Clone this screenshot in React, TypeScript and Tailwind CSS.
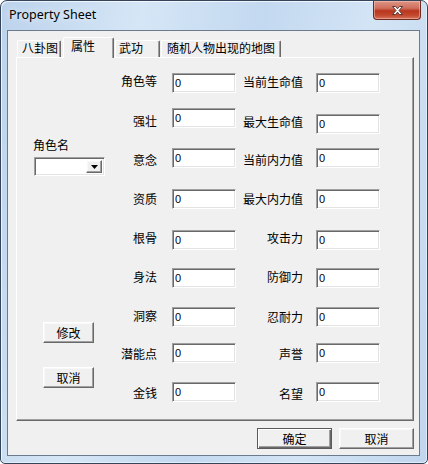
import {FC} from "react";

const cjk = "font-['Noto_Sans_CJK_SC','Noto_Sans_CJK_JP',sans-serif]";
const raised = "border border-t-white border-l-white border-r-[#696969] border-b-[#696969] shadow-[inset_-1px_-1px_0_#a0a0a0,inset_1px_1px_0_#f8f8f8]";
const sunken = "border border-t-[#a0a0a0] border-l-[#a0a0a0] border-r-white border-b-white shadow-[inset_1px_1px_0_#696969,inset_-1px_-1px_0_#e3e3e3]";

// label columns: text + margin from the one above
const leftLabels = [
    ["角色等", "mt-[15px]"], ["强壮", "mt-[24px]"], ["意念", "mt-[23px]"],
    ["资质", "mt-[23px]"], ["根骨", "mt-[23px]"], ["身法", "mt-[23px]"],
    ["洞察", "mt-[23px]"], ["潜能点", "mt-[22px]"], ["金钱", "mt-[23px]"],
];
const leftInputs = ["mt-[15px]", "mt-[15px]", "mt-[20px]", "mt-[21px]", "mt-[21px]", "mt-[18px]", "mt-[19px]", "mt-[16px]", "mt-[19px]"];

const rightLabels = [
    ["当前生命值", "mt-[16px]"], ["最大生命值", "mt-[24px]"], ["当前内力值", "mt-[22px]"],
    ["最大内力值", "mt-[23px]"], ["攻击力", "mt-[23px]"], ["防御力", "mt-[23px]"],
    ["忍耐力", "mt-[24px]"], ["声誉", "mt-[21px]"], ["名望", "mt-[24px]"],
];
const rightInputs = ["mt-[15px]", "mt-[21px]", "mt-[14px]", "mt-[21px]", "mt-[21px]", "mt-[18px]", "mt-[19px]", "mt-[16px]", "mt-[19px]"];

const Field: FC<{className: string}> = ({className}) => (
    <input readOnly value="0"
           className={`h-[20px] w-[64px] bg-white px-[2px] text-[11px] text-black font-['Liberation_Sans',sans-serif] outline-none ${sunken} ${className}`}/>
);

const Btn: FC<{label: string, className: string}> = ({label, className}) => (
    <button className={`flex h-[21px] items-center justify-center bg-[#f0f0f0] text-[12px] leading-[14px] text-black ${cjk} ${className}`}>
        {label}
    </button>
);

const Tab: FC<{label: string, active?: boolean, className: string}> = ({label, active, className}) => (
    <div className={active
        ? `relative z-10 -mb-[1px] h-[21px] whitespace-nowrap rounded-t-[2px] border-l border-t border-r border-l-white border-t-white border-r-[#696969] bg-[#f0f0f0] shadow-[inset_-1px_0_0_#a0a0a0] text-[12px] leading-[14px] ${cjk} ${className}`
        : `h-[17px] whitespace-nowrap rounded-t-[2px] border-l border-t border-r border-l-white border-t-white border-r-[#696969] bg-[#f0f0f0] shadow-[inset_-1px_0_0_#a0a0a0] text-[12px] leading-[14px] ${cjk} ${className}`}>
        {label}
    </div>
);

const App: FC = () => {
    return (
        <div className="h-[464px] w-[428px] bg-white">
            <div className="flex h-[464px] w-[428px] flex-col rounded-t-[7px] rounded-b-[5px] border border-[#34445a] bg-[linear-gradient(100deg,#bcd3ec_0%,#d5e6f6_28%,#c3d9f0_52%,#d3e4f5_74%,#c0d6ee_100%)] shadow-[inset_1px_1px_0_rgba(255,255,255,0.7),inset_-1px_-1px_0_rgba(255,255,255,0.5)]">
                {/* title bar */}
                <div className="flex h-[29px] shrink-0 items-start">
                    <span className="ml-[8px] mt-[5px] text-[12.5px] leading-[17px] text-black font-['Noto_Sans',sans-serif] [text-shadow:0_0_6px_rgba(255,255,255,0.9)]">
                        Property Sheet
                    </span>
                    <div className="ml-auto mr-[6px] flex h-[19px] w-[48px] items-center justify-center rounded-b-[4px] border border-t-0 border-[#6e2b20] bg-[linear-gradient(180deg,#dc9686_0%,#cf6e5c_40%,#b8351d_55%,#c24a30_80%,#d8745a_100%)] shadow-[inset_0_0_0_1px_rgba(255,210,200,0.45)]">
                        <svg width="13" height="11" viewBox="0 0 13 11">
                            <path d="M1.5 1.5h3l2 2.3 2-2.3h3l-3.5 4 3.5 4h-3l-2-2.3-2 2.3h-3l3.5-4z"
                                  fill="#fff" stroke="#5a3a36" strokeWidth="1" strokeLinejoin="round"/>
                        </svg>
                    </div>
                </div>

                {/* client area */}
                <div className="mb-[7px] ml-[6px] mr-[7px] flex flex-1 flex-col border border-[#6b7a8c] bg-[#f0f0f0] pl-[8px] pt-[6px]">
                    <div className="flex h-[20px] items-end">
                        <Tab label="八卦图" className="ml-[1px] w-[44px] pl-[4px]"/>
                        <Tab label="属性" active className="ml-[2px] w-[51px] pl-[7px] pt-[1px]"/>
                        <Tab label="武功" className="ml-[1px] w-[45px] pl-[3px]"/>
                        <Tab label="随机人物出现的地图" className="ml-[1px] w-[120px] pl-[5px]"/>
                    </div>

                    <div className="flex h-[364px] w-[398px] border border-t-white border-l-white border-r-[#696969] border-b-[#696969] shadow-[inset_-1px_-1px_0_#a0a0a0]">
                        {/* left column */}
                        <div className="ml-[16px] flex w-[72px] flex-col">
                            <span className={`mt-[79px] h-[16px] text-[12px] leading-[16px] text-black ${cjk}`}>角色名</span>
                            <div className={`ml-[1px] mt-[4px] flex h-[19px] w-[71px] justify-end bg-white p-[2px] ${sunken}`}>
                                <div className={`flex h-full w-[16px] items-center justify-center bg-[#f0f0f0] ${raised}`}>
                                    <svg width="7" height="4" viewBox="0 0 7 4">
                                        <path d="M0 0h7L3.5 4z" fill="#000"/>
                                    </svg>
                                </div>
                            </div>
                            <Btn label="修改" className={`ml-[10px] mt-[146px] w-[51px] ${raised}`}/>
                            <Btn label="取消" className={`ml-[10px] mt-[24px] w-[51px] ${raised}`}/>
                        </div>

                        {/* first group */}
                        <div className="flex w-[52px] flex-col items-end">
                            {leftLabels.map(([t, m]) => (
                                <span key={t} className={`h-[16px] whitespace-nowrap text-[12px] leading-[16px] text-black ${cjk} ${m}`}>{t}</span>
                            ))}
                        </div>
                        <div className="ml-[15px] flex flex-col">
                            {leftInputs.map((m, i) => <Field key={i} className={m}/>)}
                        </div>

                        {/* second group */}
                        <div className="flex w-[67px] flex-col items-end">
                            {rightLabels.map(([t, m]) => (
                                <span key={t} className={`h-[16px] whitespace-nowrap text-[12px] leading-[16px] text-black ${cjk} ${m}`}>{t}</span>
                            ))}
                        </div>
                        <div className="ml-[13px] flex flex-col">
                            {rightInputs.map((m, i) => <Field key={i} className={m}/>)}
                        </div>
                    </div>

                    <div className="mt-[7px] flex w-[398px] justify-end gap-[7px]">
                        <Btn label="确定" className="w-[75px] border border-[#5a5a5a] shadow-[inset_1px_1px_0_#fff,inset_-1px_-1px_0_#696969,inset_-2px_-2px_0_#a0a0a0]"/>
                        <Btn label="取消" className={`w-[75px] ${raised}`}/>
                    </div>
                </div>
            </div>
        </div>
    )
}

export default App
